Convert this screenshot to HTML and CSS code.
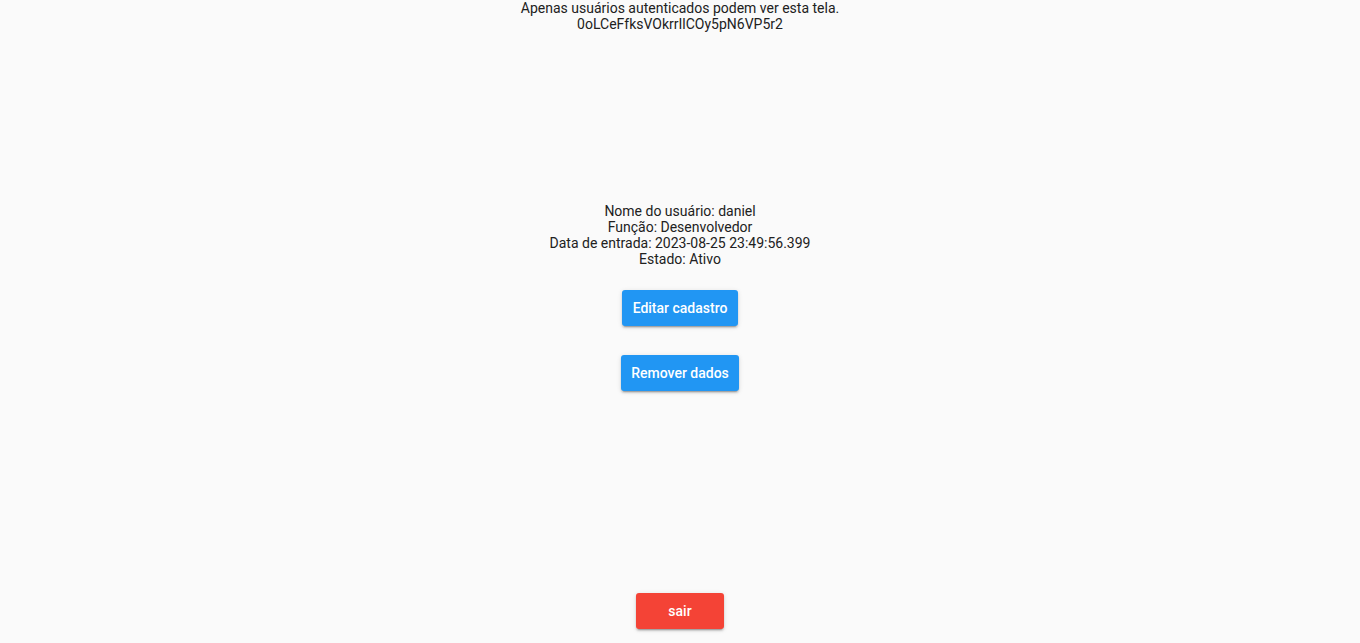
FILE: index.html
```html
<!DOCTYPE html>
<html lang="pt">
<head>
<meta charset="utf-8">
<title>Home</title>
<link rel="stylesheet" href="styles.css">
</head>
<body>
<div class="page">
  <div class="top">
    <div class="line">Apenas usuários autenticados podem ver esta tela.</div>
    <div class="line">0oLCeFfksVOkrrIlCOy5pN6VP5r2</div>
  </div>
  <div class="middle">
    <div class="info">
      <div class="line">Nome do usuário: daniel</div>
      <div class="line">Função: Desenvolvedor</div>
      <div class="line">Data de entrada: 2023-08-25 23:49:56.399</div>
      <div class="line">Estado: Ativo</div>
    </div>
    <button class="btn btn-blue btn-first">Editar cadastro</button>
    <button class="btn btn-blue btn-second">Remover dados</button>
  </div>
  <div class="bottom">
    <button class="btn btn-red btn-exit">sair</button>
  </div>
</div>
</body>
</html>
```

FILE: styles.css
```css
html, body {
  margin: 0;
  padding: 0;
  background: #fafafa;
}
body {
  font-family: Roboto, "Liberation Sans", sans-serif;
  font-size: 14px;
  color: #212121;
}
.page {
  height: 643px;
  display: flex;
  flex-direction: column;
  align-items: center;
}
.top {
  text-align: center;
}
.line {
  line-height: 16px;
  height: 16px;
}
.middle {
  flex: 1;
  display: flex;
  flex-direction: column;
  align-items: center;
  padding-top: 171px;
}
.info {
  text-align: center;
}
.btn {
  font-family: Roboto, "Liberation Sans", sans-serif;
  font-size: 14px;
  font-weight: 500;
  color: #ffffff;
  border: none;
  border-radius: 3px;
  height: 36px;
  min-width: 88px;
  padding: 0 10.5px;
  box-shadow: 0 3px 1px -2px rgba(0,0,0,.2), 0 2px 2px 0 rgba(0,0,0,.14), 0 1px 5px 0 rgba(0,0,0,.12);
  cursor: pointer;
}
.btn-blue {
  background: #2196f3;
}
.btn-red {
  background: #f44336;
}
.btn-first {
  margin-top: 23px;
}
.btn-second {
  margin-top: 29px;
}
.bottom {
  padding-bottom: 14px;
}
```
